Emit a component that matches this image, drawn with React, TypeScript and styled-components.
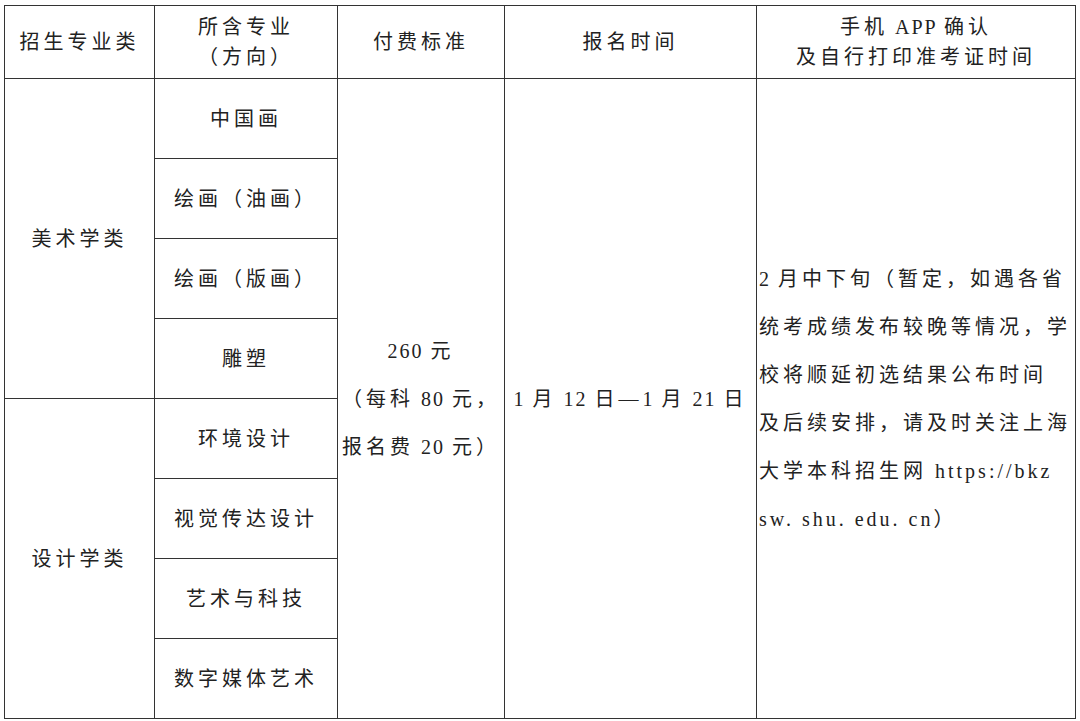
import styled, { createGlobalStyle } from "styled-components";

/* ================= STYLES ================= */

const GlobalStyle = createGlobalStyle`
  html, body {
    margin: 0;
    padding: 0;
    background: #ffffff;
  }
  body {
    font-family: "Liberation Serif", "Noto Sans CJK SC", serif;
    color: #222222;
  }
`;

const Page = styled.div`
  width: 1080px;
  height: 721px;
  padding: 5px 0 0 4px;
  box-sizing: border-box;
  background: #ffffff;
`;

const Table = styled.table`
  width: 1071px;
  table-layout: fixed;
  border-collapse: collapse;
  font-size: 20px;
  letter-spacing: 4px;
`;

const HeadCell = styled.th`
  height: 72px;
  padding: 0;
  border: 1.5px solid #333333;
  font-weight: 400;
  line-height: 30px;
  text-align: center;
  vertical-align: middle;
`;

const Cell = styled.td<{ $align?: "left" | "center" }>`
  height: 79px;
  padding: 0 0 0 ${({ $align }) => ($align === "left" ? "2px" : "0")};
  border: 1.5px solid #333333;
  line-height: 48px;
  text-align: ${({ $align }) => $align ?? "center"};
  vertical-align: middle;
  white-space: nowrap;
`;

const Line = styled.span`
  display: block;
`;

const Latin = styled.span<{ $wide?: boolean }>`
  letter-spacing: ${({ $wide }) => ($wide ? "3px" : "2px")};
`;

/* ================= HELPERS ================= */

// ascii runs get tighter spacing than the cjk glyphs; letters a bit wider than digits
const Txt = ({ children }: { children: string }) => (
  <>
    {children.split(/([\x20-\x7e]+)/).map((part, i) =>
      /^[\x20-\x7e]+$/.test(part) ? (
        <Latin key={i} $wide={/[a-z]/.test(part)}>
          {part}
        </Latin>
      ) : (
        part
      )
    )}
  </>
);

/* ================= DATA ================= */

const columns = [150, 183, 167, 252, 319];

const majors = [
  "中国画",
  "绘画（油画）",
  "绘画（版画）",
  "雕塑",
  "环境设计",
  "视觉传达设计",
  "艺术与科技",
  "数字媒体艺术",
];

const feeLines = ["260 元", "（每科 80 元，", "报名费 20 元）"];

const noteLines = [
  "2 月中下旬（暂定，如遇各省",
  "统考成绩发布较晚等情况，学",
  "校将顺延初选结果公布时间",
  "及后续安排，请及时关注上海",
  "大学本科招生网 https://bkz",
  "sw. shu. edu. cn）",
];

/* ================= COMPONENT ================= */

const App = () => {
  return (
    <Page>
      <GlobalStyle />
      <Table>
        <colgroup>
          {columns.map((w, i) => (
            <col key={i} style={{ width: w }} />
          ))}
        </colgroup>
        <thead>
          <tr>
            <HeadCell>招生专业类</HeadCell>
            <HeadCell>
              <Line>所含专业</Line>
              <Line>（方向）</Line>
            </HeadCell>
            <HeadCell>付费标准</HeadCell>
            <HeadCell>报名时间</HeadCell>
            <HeadCell>
              <Line>
                <Txt>手机 APP 确认</Txt>
              </Line>
              <Line>及自行打印准考证时间</Line>
            </HeadCell>
          </tr>
        </thead>
        <tbody>
          {majors.map((m, i) => (
            <tr key={m}>
              {i === 0 && <Cell rowSpan={4}>美术学类</Cell>}
              {i === 4 && <Cell rowSpan={4}>设计学类</Cell>}
              <Cell>{m}</Cell>
              {i === 0 && (
                <>
                  <Cell rowSpan={8}>
                    {feeLines.map((l) => (
                      <Line key={l}>
                        <Txt>{l}</Txt>
                      </Line>
                    ))}
                  </Cell>
                  <Cell rowSpan={8}>
                    <Txt>1 月 12 日—1 月 21 日</Txt>
                  </Cell>
                  <Cell rowSpan={8} $align="left">
                    {noteLines.map((l) => (
                      <Line key={l}>
                        <Txt>{l}</Txt>
                      </Line>
                    ))}
                  </Cell>
                </>
              )}
            </tr>
          ))}
        </tbody>
      </Table>
    </Page>
  );
};

export default App;
